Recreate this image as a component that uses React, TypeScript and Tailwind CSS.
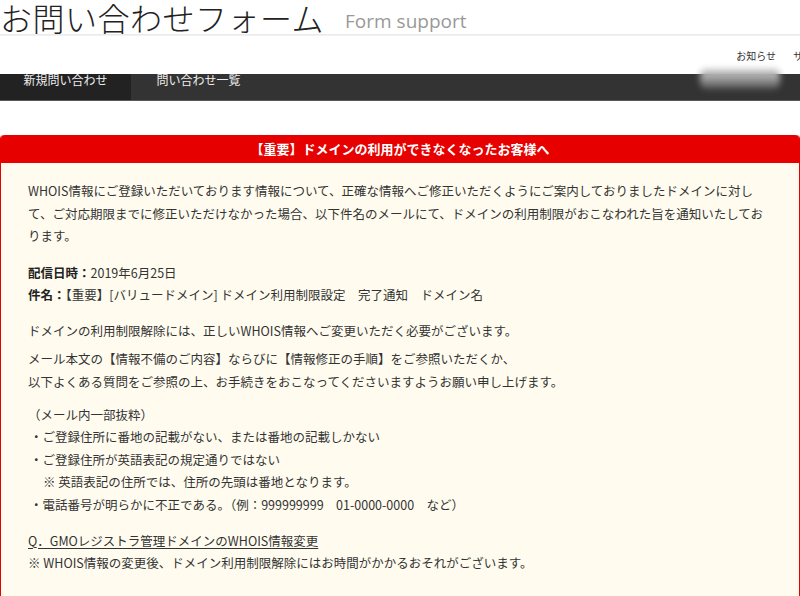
// お問い合わせフォーム — important notice page

const jp = '"Noto Sans CJK JP", "Noto Sans", sans-serif';

const bullets = [
  '・ご登録住所に番地の記載がない、または番地の記載しかない',
  '・ご登録住所が英語表記の規定通りではない',
];

export default function App() {
  return (
    <div className="min-h-screen bg-white text-[#333]" style={{ fontFamily: jp }}>
      {/* Header */}
      <header>
        <div className="flex items-end h-[34px] whitespace-nowrap">
          <h1 className="text-[32px] leading-[34px] font-light text-[#222] tracking-[0.5px]">
            お問い合わせフォーム
          </h1>
          <span
            className="ml-[21px] mb-[1px] text-[19px] leading-[24px] text-[#999]"
            style={{ fontFamily: '"Open Sans", sans-serif' }}
          >
            Form support
          </span>
        </div>
        <div className="h-[2px] bg-gradient-to-b from-[#e6e6e6] to-[#f6f6f6]" />
        <div className="h-[38px] flex justify-end items-center overflow-hidden whitespace-nowrap">
          <div className="flex gap-[17px] text-[10px] leading-[12px] text-[#333] mr-[-33px] pt-[1px]">
            <span>お知らせ</span>
            <span>サポート</span>
          </div>
        </div>
      </header>

      {/* Nav */}
      <nav className="flex h-[27px] bg-[#333] border-b border-[#5a5a5a]">
        <div className="w-[131px] bg-[#222] text-center text-[12px] leading-[12px] text-[#eee]">
          新規問い合わせ
        </div>
        <div className="w-[131px] text-center text-[12px] leading-[12px] text-[#eee] pl-[4px]">
          問い合わせ一覧
        </div>
        <div className="ml-auto mr-[20px] -mt-[5px] w-[80px] h-[20px] rounded-[6px] bg-gradient-to-b from-[#d0d0d0] via-[#999] to-[#555] blur-[3px]" />
      </nav>

      {/* Notice */}
      <main className="pt-[34px]">
        <section className="rounded-t-[4px] border-x border-[#e60000] bg-[#fffcef]">
          <h2 className="h-[28px] rounded-t-[4px] bg-[#e60000] flex items-center justify-center text-white text-[13px] font-bold">
            【重要】ドメインの利用ができなくなったお客様へ
          </h2>

          <div className="pl-[27px] pr-[20px] pt-[17px] pb-[40px] text-[12.5px] leading-[22.5px] whitespace-nowrap">
            <p>
              WHOIS情報にご登録いただいております情報について、正確な情報へご修正いただくようにご案内しておりましたドメインに対し
              <br />
              て、ご対応期限までに修正いただけなかった場合、以下件名のメールにて、ドメインの利用制限がおこなわれた旨を通知いたしてお
              <br />
              ります。
            </p>

            <p className="mt-[14px]">
              <b className="text-[#222]">配信日時：</b>2019年6月25日
              <br />
              <b className="text-[#222]">件名：</b>【重要】[バリュードメイン] ドメイン利用制限設定　完了通知　ドメイン名
            </p>

            <p className="mt-[13.5px]">
              ドメインの利用制限解除には、正しいWHOIS情報へご変更いただく必要がございます。
            </p>

            <p className="mt-[5.5px]">
              メール本文の【情報不備のご内容】ならびに【情報修正の手順】をご参照いただくか、
              <br />
              以下よくある質問をご参照の上、お手続きをおこなってくださいますようお願い申し上げます。
            </p>

            <div className="mt-[10.5px]">
              <p>（メール内一部抜粋）</p>
              {bullets.map(b => (
                <p key={b} className="pl-[2px]">{b}</p>
              ))}
              <p className="pl-[15px]">※ 英語表記の住所では、住所の先頭は番地となります。</p>
              <p className="pl-[2px]">・電話番号が明らかに不正である。（例：999999999　01-0000-0000　など）</p>
            </div>

            <p className="mt-[13.5px]">
              <a href="#" className="underline underline-offset-2 text-[#333]">
                Q．GMOレジストラ管理ドメインのWHOIS情報変更
              </a>
              <br />
              ※ WHOIS情報の変更後、ドメイン利用制限解除にはお時間がかかるおそれがございます。
            </p>
          </div>
        </section>
      </main>
    </div>
  );
}
